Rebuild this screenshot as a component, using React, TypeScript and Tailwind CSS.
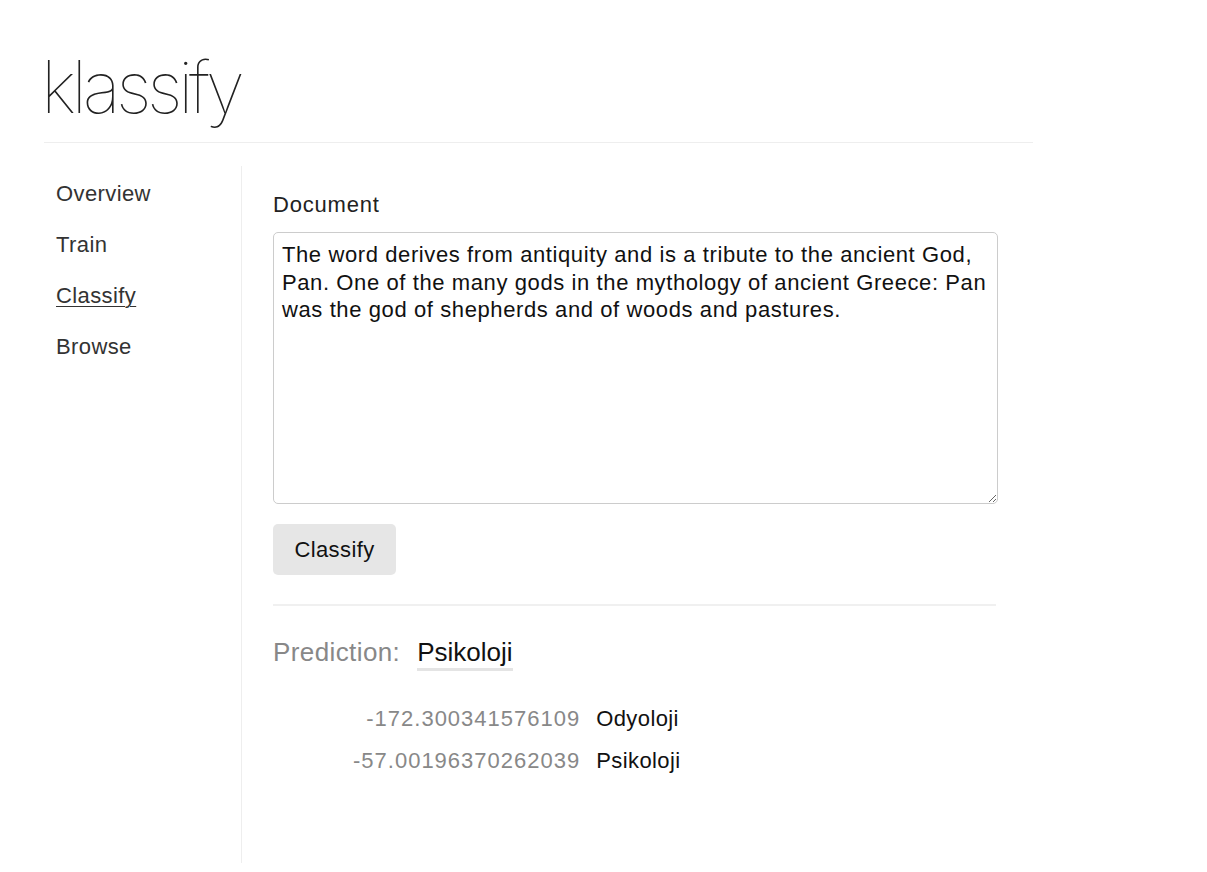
import { useState } from "react";

const scores = [
  { value: "-172.300341576109", label: "Odyoloji" },
  { value: "-57.00196370262039", label: "Psikoloji" },
];

const navItems = ["Overview", "Train", "Classify", "Browse"];

export default function App() {
  const [doc, setDoc] = useState(
    "The word derives from antiquity and is a tribute to the ancient God, Pan. One of the many gods in the mythology of ancient Greece: Pan was the god of shepherds and of woods and pastures."
  );

  return (
    <div className="min-h-screen bg-white font-['Liberation_Sans',Arial,sans-serif] text-[#222]">
      <div className="ml-[44px] w-[989px]">
        <header className="border-b border-[#eee] pt-[44px] pb-[12px]">
          <h1 className="-ml-[3px] font-['Inter','Roboto',sans-serif] text-[72px] font-thin leading-[86px] tracking-[-4.5px] text-[#222]">
            klassify
          </h1>
        </header>

        <div className="flex">
          {/* Sidebar nav */}
          <nav className="mt-[23px] w-[198px] shrink-0 border-r border-[#eee] pl-[12px] pt-[14px] h-[697px]">
            <ul className="flex flex-col gap-[23px]">
              {navItems.map((item) => (
                <li key={item} className="text-[22px] leading-[28px] tracking-[0.4px] text-[#333]">
                  <a
                    href="#"
                    className={item === "Classify" ? "underline underline-offset-[3px] decoration-1" : ""}
                  >
                    {item}
                  </a>
                </li>
              ))}
            </ul>
          </nav>

          {/* Main content */}
          <main className="pl-[31px] pt-[48px] w-[756px]">
            <label className="block text-[22px] leading-[28px] tracking-[0.8px] text-[#222]">Document</label>
            <textarea
              value={doc}
              onChange={(e) => setDoc(e.target.value)}
              className="mt-[13px] block h-[272px] w-[725px] resize-y rounded-[5px] border border-[#ccc] px-[8px] pt-[8px] pb-[6px] text-[22px] leading-[27.5px] tracking-[0.6px] text-[#111] outline-none"
            />
            <button className="mt-[20px] h-[51px] w-[123px] rounded-[5px] bg-[#e6e6e6] text-[22px] tracking-[0.4px] text-[#111]">
              Classify
            </button>

            <div className="mt-[29px] w-[723px] border-t-2 border-[#f0f0f0]" />

            <div className="mt-[30px] flex items-baseline text-[26px] leading-[32px]">
              <span className="tracking-[0.4px] text-[#888]">Prediction:</span>
              <span className="ml-[17px] border-b-[3px] border-[#e4e4e4] text-[#111]">Psikoloji</span>
            </div>

            <table className="mt-[26px] ml-[80px] text-[22px]">
              <tbody>
                {scores.map((s) => (
                  <tr key={s.label} className="h-[42px]">
                    <td className="pr-[16px] text-right tracking-[1px] text-[#888]">{s.value}</td>
                    <td className="tracking-[0.4px] text-[#111]">{s.label}</td>
                  </tr>
                ))}
              </tbody>
            </table>
          </main>
        </div>
      </div>
    </div>
  );
}
